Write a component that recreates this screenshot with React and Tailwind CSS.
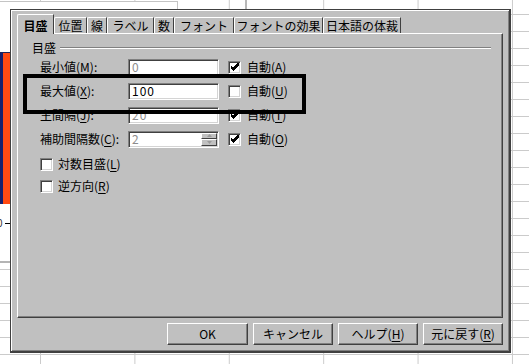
import React from 'react';

const font = "font-['Noto_Sans_CJK_JP','Noto_Sans',sans-serif] text-[12px] leading-none";

function Key({ children }) {
  return <span className="underline underline-offset-[2px] decoration-[1px]">{children}</span>;
}

function Check({ checked }) {
  return (
    <span className="flex h-[13px] w-[13px] shrink-0 items-center justify-center border border-t-[#808080] border-l-[#808080] border-b-white border-r-white bg-white shadow-[inset_1px_1px_0_#404040,inset_-1px_-1px_0_#d4d4d4]">
      {checked && (
        <svg width="8" height="8" viewBox="0 0 7 7" shapeRendering="crispEdges">
          <path d="M0 2 L2 4 L6 0 L7 0 L7 2 L2 7 L0 5 Z" fill="#000" />
        </svg>
      )}
    </span>
  );
}

function Field({ value, dim, spin }) {
  return (
    <div className="flex h-[17px] w-[91px] shrink-0 items-center border border-t-[#808080] border-l-[#808080] border-b-white border-r-white bg-white pl-[3px] shadow-[inset_1px_1px_0_#404040,inset_-1px_-1px_0_#d4d4d4]">
      <span className={dim ? 'text-[#8c8c8c] tracking-[1px]' : 'text-black tracking-[1px]'}>{value}</span>
      {spin && (
        <div className="ml-auto mr-[1px] flex h-[13px] w-[16px] flex-col">
          <div className="flex flex-1 items-center justify-center border border-t-white border-l-white border-r-[#404040] border-b-[#404040] bg-[#c0c0c0]">
            <svg width="5" height="3" viewBox="0 0 5 3"><path d="M0 3 L2.5 0 L5 3 Z" fill="#9a9a9a" /></svg>
          </div>
          <div className="flex flex-1 items-center justify-center border border-t-white border-l-white border-r-[#404040] border-b-[#404040] bg-[#c0c0c0]">
            <svg width="5" height="3" viewBox="0 0 5 3"><path d="M0 0 L2.5 3 L5 0 Z" fill="#9a9a9a" /></svg>
          </div>
        </div>
      )}
    </div>
  );
}

function ScaleRow({ label, k, value, dim, spin, auto, autoKey }) {
  return (
    <div className="flex h-[24px] items-center pl-[8px]">
      <div className="w-[88px] shrink-0 whitespace-nowrap">
        {label}(<Key>{k}</Key>):
      </div>
      <Field value={value} dim={dim} spin={spin} />
      <div className="ml-[9px] flex items-center gap-[6px] whitespace-nowrap">
        <Check checked={auto} />
        <span>自動(<Key>{autoKey}</Key>)</span>
      </div>
    </div>
  );
}

function CheckRow({ label, k }) {
  return (
    <div className="flex h-[22px] items-center gap-[5px] pl-[8px]">
      <Check />
      <span>{label}(<Key>{k}</Key>)</span>
    </div>
  );
}

const tabs = [
  { label: '目盛', w: 'w-[37px]', active: true },
  { label: '位置', w: 'w-[33px]' },
  { label: '線', w: 'w-[20px]' },
  { label: 'ラベル', w: 'w-[47px]' },
  { label: '数', w: 'w-[20px]' },
  { label: 'フォント', w: 'w-[60px]' },
  { label: 'フォントの効果', w: 'w-[89px]' },
  { label: '日本語の体裁', w: 'w-[78px]' },
];

function Tab({ label, w, active }) {
  if (active) {
    return (
      <div className={`${w} relative z-10 -mb-[1px] flex h-[20px] items-center justify-center rounded-tl-[2px] border-l border-t border-r border-l-white border-t-white border-r-[#404040] bg-[#c0c0c0] pt-[2px] font-bold`}>
        {label}
      </div>
    );
  }
  return (
    <div className={`${w} flex h-[16px] items-center justify-center whitespace-nowrap rounded-tl-[2px] border-l border-t border-r border-l-white border-t-white border-r-[#404040] pt-[1px]`}>
      {label}
    </div>
  );
}

function Button({ children, w }) {
  return (
    <button className={`${w} h-[22px] border border-t-white border-l-white border-r-[#404040] border-b-[#404040] bg-[#c0c0c0] shadow-[inset_-1px_-1px_0_#808080] text-black`}>
      {children}
    </button>
  );
}

export default function App() {
  return (
    <div className={`${font} relative h-[364px] w-[529px] overflow-hidden bg-white bg-[linear-gradient(to_right,#cbcbcb_1px,transparent_1px),linear-gradient(to_bottom,#cbcbcb_1px,transparent_1px)] bg-[size:94.4px_17px] bg-[position:40px_14px] text-black`}>
      {/* chart object behind the dialog */}
      <div className="absolute left-[-2px] top-[1px] h-[262px] w-[180px] border border-b-2 border-[#c4c4c4] border-b-[#b4b4b4] bg-white">
        <div className="absolute left-0 top-[50px] flex h-[152px] w-[12px] border-t border-[#1a2458]">
          <div className="w-[4px] bg-[#14206e]" />
          <div className="flex-1 bg-[#ff4a12]" />
        </div>
        <div className="absolute left-[-2px] top-[216px] text-[10px] text-[#333]">0</div>
        <div className="absolute left-[6px] top-[221px] h-px w-[6px] bg-black" />
      </div>
      <div className="absolute left-[245px] top-0 h-[10px] w-[2px] bg-[#b8b8b8]" />

      {/* dialog */}
      <div className="absolute left-[10px] top-[9px] flex h-[344px] w-[501px] flex-col border-l border-t border-r-2 border-b-2 border-[#404040] bg-[#c0c0c0] pl-[6px] pr-[6px] pt-[4px] shadow-[inset_1px_1px_0_#ffffff,inset_-1px_-1px_0_#808080]">
        <div className="flex h-[19px] items-end">
          {tabs.map((t) => (
            <Tab key={t.label} {...t} />
          ))}
        </div>

        <div className="flex h-[285px] w-[486px] flex-col border border-t-white border-l-white border-r-[#404040] border-b-[#404040] pl-[14px] pr-[11px] pt-[7px] shadow-[inset_-1px_-1px_0_#808080]">
          <div className="flex h-[14px] items-center gap-[4px]">
            <span>目盛</span>
            <div className="h-[2px] flex-1 border-t border-b border-t-[#808080] border-b-white" />
          </div>
          <ScaleRow label="最小値" k="M" value="0" dim auto autoKey="A" />
          <ScaleRow label="最大値" k="X" value="100" autoKey="U" />
          <ScaleRow label="主間隔" k="J" value="20" dim auto autoKey="T" />
          <ScaleRow label="補助間隔数" k="C" value="2" dim spin auto autoKey="O" />
          <div className="mt-[2px]">
            <CheckRow label="対数目盛" k="L" />
            <CheckRow label="逆方向" k="R" />
          </div>
        </div>

        <div className="mt-[5px] flex justify-end gap-[5px]">
          <Button w="w-[81px]">OK</Button>
          <Button w="w-[80px]">キャンセル</Button>
          <Button w="w-[80px]">ヘルプ(<Key>H</Key>)</Button>
          <Button w="w-[80px]">元に戻す(<Key>R</Key>)</Button>
        </div>
      </div>

      {/* annotation frame */}
      <div className="absolute left-[23px] top-[74px] h-[40px] w-[283px] border-4 border-black" />
    </div>
  );
}
